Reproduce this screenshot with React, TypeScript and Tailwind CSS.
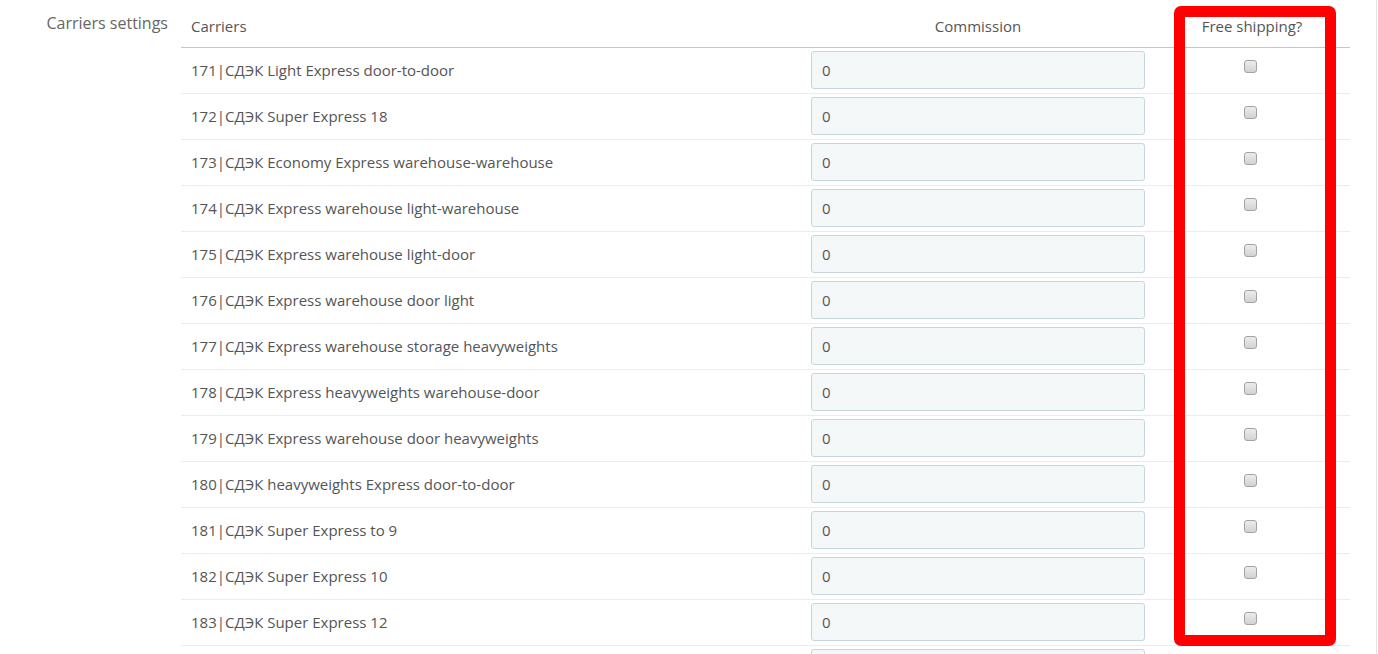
const carriers = [
  '171|СДЭК Light Express door-to-door',
  '172|СДЭК Super Express 18',
  '173|СДЭК Economy Express warehouse-warehouse',
  '174|СДЭК Express warehouse light-warehouse',
  '175|СДЭК Express warehouse light-door',
  '176|СДЭК Express warehouse door light',
  '177|СДЭК Express warehouse storage heavyweights',
  '178|СДЭК Express heavyweights warehouse-door',
  '179|СДЭК Express warehouse door heavyweights',
  '180|СДЭК heavyweights Express door-to-door',
  '181|СДЭК Super Express to 9',
  '182|СДЭК Super Express 10',
  '183|СДЭК Super Express 12',
  '184|СДЭК Super Express 14',
]

function Checkbox() {
  return (
    <div className="w-[13px] h-[13px] rounded-[3px] border border-[#a3a3a3] bg-gradient-to-b from-[#ececec] to-[#d2d2d2]" />
  )
}

export default function App() {
  return (
    <div className="relative w-[1377px] h-[654px] overflow-hidden border-r border-[#e3e3e3] bg-white text-[15px] text-[#555] font-['Open_Sans',sans-serif]">
      <div className="flex">
        <div className="w-[181px] shrink-0 pr-[13px] pt-[12px] text-right text-[16px] leading-[22px] text-[#666]">
          Carriers settings
        </div>
        <div className="w-[1169px] shrink-0">
          <div className="flex h-[48px] border-b border-[#a0d0eb]">
            <div className="w-[625px] flex items-end pb-[11px] px-[10px] leading-[20px]">Carriers</div>
            <div className="w-[344px] flex items-end justify-center pb-[11px] leading-[20px]">Commission</div>
            <div className="w-[200px] flex items-end justify-center pb-[11px] pl-[4px] leading-[20px]">Free shipping?</div>
          </div>
          {carriers.map((name) => (
            <div key={name} className="flex h-[46px] border-b border-[#eaedef]">
              <div className="w-[625px] flex items-center pb-[2px] px-[10px] leading-[20px]">{name}</div>
              <div className="w-[344px] px-[5px] pt-[3px]">
                <div className="h-[38px] rounded-[3px] border border-[#c7d6db] bg-[#f5f8f9] flex items-center px-[10px] text-[#555]">
                  0
                </div>
              </div>
              <div className="w-[200px] flex justify-center pt-[12px]">
                <Checkbox />
              </div>
            </div>
          ))}
        </div>
      </div>
      <div className="absolute left-[1174px] top-[6px] w-[162px] h-[640px] rounded-[7px] border-[11px] border-[#ff0000]" />
    </div>
  )
}
